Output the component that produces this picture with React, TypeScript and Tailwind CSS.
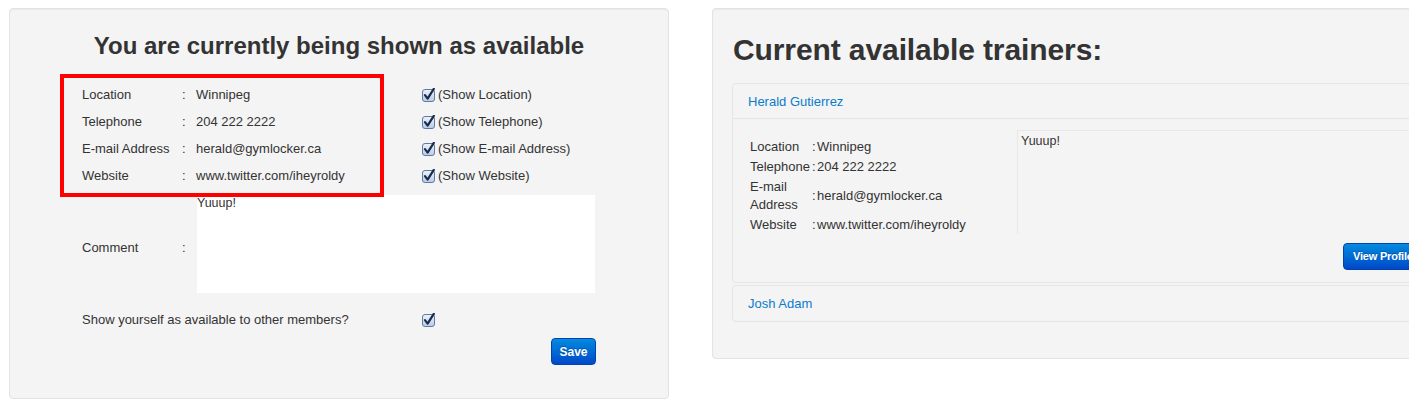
import React from "react";

const font = { fontFamily: '"Liberation Sans", Arial, Helvetica, sans-serif' };

function Check() {
  return (
    <svg width="14" height="14" viewBox="0 0 14 14" className="shrink-0">
      <defs>
        <linearGradient id="cbg" x1="0" y1="0" x2="0" y2="1">
          <stop offset="0" stopColor="#eef3fb" />
          <stop offset="1" stopColor="#b9cbe6" />
        </linearGradient>
      </defs>
      <rect x="0.5" y="1.5" width="12" height="12" rx="2.5" fill="url(#cbg)" stroke="#5f7aa3" />
      <path d="M3 7.2 L5.6 10.6 L11.8 0.8" fill="none" stroke="#1b2b4d" strokeWidth="2.2" strokeLinecap="round" strokeLinejoin="round" />
    </svg>
  );
}

const rows = [
  ["Location", "Winnipeg", "(Show Location)"],
  ["Telephone", "204 222 2222", "(Show Telephone)"],
  ["E-mail Address", "herald@gymlocker.ca", "(Show E-mail Address)"],
  ["Website", "www.twitter.com/iheyroldy", "(Show Website)"],
];

function LeftPanel() {
  return (
    <div className="relative w-[660px] h-[391px] shrink-0 bg-[#f4f4f4] border border-[#e3e3e3] rounded-[4px] shadow-[inset_0_1px_1px_rgba(0,0,0,0.05)] pt-[17px] pl-[72px] text-[#333] text-[13px]">
      <h3 className="h-[40px] leading-[40px] text-[24px] font-bold text-center text-[#333] -ml-[72px] w-[658px]">
        You are currently being shown as available
      </h3>
      <div className="mt-[15px]">
        {rows.map(([l, v, s]) => (
          <div key={l} className="flex items-center h-[27px]">
            <div className="w-[100px]">{l}</div>
            <div className="w-[14px]">:</div>
            <div className="w-[226px]">{v}</div>
            <div className="flex items-center gap-[2px]">
              <Check />
              <span>{s}</span>
            </div>
          </div>
        ))}
      </div>
      <div className="flex items-center mt-[6px] h-[98px]">
        <div className="w-[100px] pt-[7px]">Comment</div>
        <div className="w-[15px] pt-[7px]">:</div>
        <div className="w-[398px] h-[98px] bg-white text-[12.5px] leading-[14px] px-0 pt-[1px]">Yuuup!</div>
      </div>
      <div className="flex items-center h-[24px] mt-[15px]">
        <div className="w-[340px]">Show yourself as available to other members?</div>
        <Check />
      </div>
      <div className="w-[514px] flex justify-end mt-[6px]">
        <button className="w-[45px] h-[27px] rounded-[4px] border border-[#0044aa] bg-gradient-to-b from-[#0a8ae0] to-[#0047c8] text-white text-[12px] font-bold [text-shadow:0_-1px_0_rgba(0,0,0,0.25)]">
          Save
        </button>
      </div>
      <div className="absolute left-[50px] top-[65px] w-[324px] h-[123px] border-[4px] border-[#ff0000]" />
    </div>
  );
}

const info = [
  ["Location", "Winnipeg"],
  ["Telephone", "204 222 2222"],
  ["E-mail Address", "herald@gymlocker.ca"],
  ["Website", "www.twitter.com/iheyroldy"],
];

function RightPanel() {
  return (
    <div className="w-[760px] h-[351px] shrink-0 bg-[#f4f4f4] border border-[#e3e3e3] rounded-[4px] shadow-[inset_0_1px_1px_rgba(0,0,0,0.05)] pt-[21px] pl-[19px] text-[#333] text-[13px]">
      <h2 className="h-[40px] leading-[40px] text-[30px] font-bold text-[#333] pl-[1px] tracking-[-0.1px]">Current available trainers:</h2>
      <div className="mt-[13px] w-[740px]">
        <div className="border border-[#e5e5e5] rounded-[4px]">
          <div className="h-[35px] flex items-center px-[15px] pt-[1px] border-b border-[#e5e5e5] text-[#0a7ccc]">Herald Gutierrez</div>
          <div className="pt-[11px] pl-[17px] pr-[15px] pb-[12px]">
            <div className="flex">
              <div className="w-[267px] pt-[7px]">
                {info.map(([l, v]) => (
                  <div key={l} className="flex items-center py-[1px] leading-[18px]">
                    <div className="w-[62px]">{l}</div>
                    <div className="w-[5px]">:</div>
                    <div>{v}</div>
                  </div>
                ))}
              </div>
              <div className="flex-1 h-[104px] border-t border-l border-[#e8e8e8] pl-[3px] pt-[1px] text-[12.5px]">Yuuup!</div>
            </div>
            <div className="flex mt-[8px] pl-[593px]">
              <button className="w-[78px] h-[27px] rounded-[4px] border border-[#0044aa] bg-gradient-to-b from-[#0a8ae0] to-[#0047c8] text-white text-[11px] tracking-[-0.2px] font-bold text-left pl-[9px] whitespace-nowrap [text-shadow:0_-1px_0_rgba(0,0,0,0.25)]">
                View Profile
              </button>
            </div>
          </div>
        </div>
        <div className="mt-[2px] h-[37px] border border-[#e5e5e5] rounded-[4px] flex items-center px-[15px] text-[#0a7ccc]">
          Josh Adam
        </div>
      </div>
    </div>
  );
}

export default function App() {
  return (
    <div style={font} className="w-[1409px] h-[405px] overflow-hidden bg-white flex items-start pl-[9px] pt-[8px] gap-[43px]">
      <LeftPanel />
      <RightPanel />
    </div>
  );
}
